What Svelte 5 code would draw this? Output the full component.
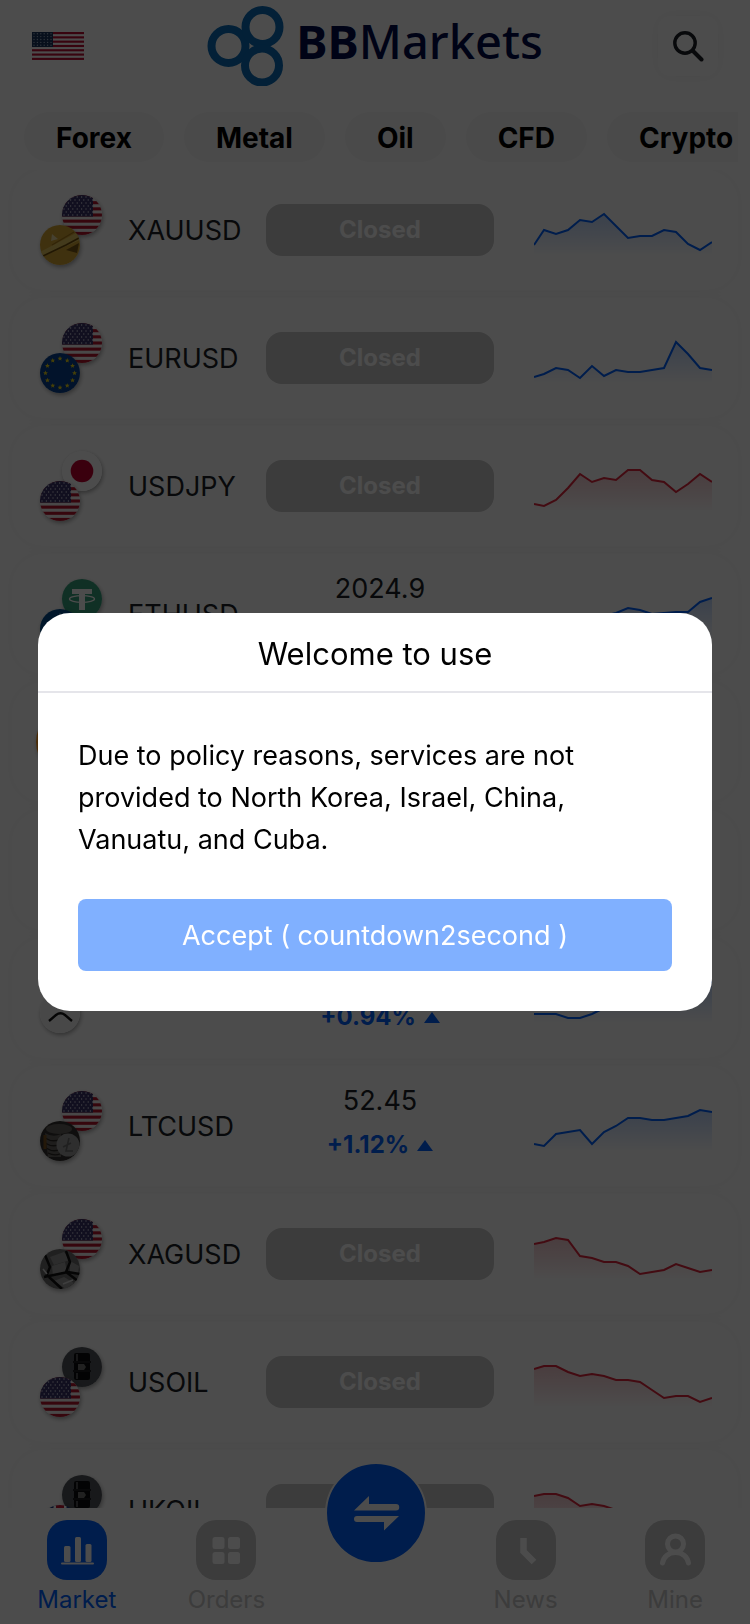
<script lang="ts">
  type Quote = {
    symbol: string
    icons: string[]
    price?: string
    change?: string
    up: boolean
    points: number[]
  }

  const tabs = ['Forex', 'Metal', 'Oil', 'CFD', 'Crypto']

  const quotes: Quote[] = [
    { symbol: 'XAUUSD', icons: ['us', 'gold'], up: true, points: [55, 40, 44, 40, 30, 32, 24, 36, 48, 46, 46, 40, 42, 54, 60, 52] },
    { symbol: 'EURUSD', icons: ['us', 'eu'], up: true, points: [59, 56, 50, 52, 60, 48, 58, 52, 54, 54, 52, 50, 24, 36, 50, 52] },
    { symbol: 'USDJPY', icons: ['jp', 'us'], up: false, points: [58, 60, 54, 42, 28, 36, 32, 34, 24, 24, 34, 36, 46, 38, 28, 36] },
    { symbol: 'ETHUSD', icons: ['usdt', 'eth'], price: '2024.9', change: '+1.05%', up: true, points: [58, 60, 54, 50, 48, 44, 42, 39, 34, 36, 40, 39, 38, 38, 28, 24] },
    { symbol: 'BTCUSD', icons: ['btc'], price: '60120', change: '+0.82%', up: true, points: [60, 58, 54, 50, 48, 46, 42, 40, 38, 36, 38, 36, 32, 30, 28, 24] },
    { symbol: 'BCHUSD', icons: ['us', 'btc'], price: '318.2', change: '+0.61%', up: true, points: [60, 56, 54, 50, 50, 46, 44, 40, 38, 36, 34, 36, 30, 30, 26, 24] },
    { symbol: 'XRPUSD', icons: ['us', 'xrp'], price: '0.5312', change: '+0.94%', up: true, points: [56, 56, 56, 60, 60, 56, 50, 46, 42, 40, 38, 36, 34, 30, 26, 24] },
    { symbol: 'LTCUSD', icons: ['us', 'ltc'], price: '52.45', change: '+1.12%', up: true, points: [58, 60, 48, 46, 44, 58, 46, 40, 32, 32, 34, 34, 32, 30, 24, 26] },
    { symbol: 'XAGUSD', icons: ['us', 'silver'], up: false, points: [30, 28, 24, 26, 42, 44, 48, 48, 52, 60, 58, 56, 50, 54, 58, 56] },
    { symbol: 'USOIL', icons: ['oil', 'us'], up: false, points: [27, 24, 24, 30, 34, 32, 34, 38, 38, 40, 48, 56, 54, 54, 60, 56] },
    { symbol: 'UKOIL', icons: ['oil', 'uk'], up: false, points: [26, 24, 24, 28, 36, 34, 36, 40, 40, 42, 48, 54, 54, 56, 60, 58] },
  ]

  let countdown = $state(2)

  function line(points: number[]) {
    return points.map((y, i) => `${i === 0 ? 0 : i * 12 - 2},${y}`).join(' ')
  }

  const stars = Array.from({ length: 12 }, (_, i) => {
    const a = (i * Math.PI) / 6
    return { x: 20 + 14.5 * Math.sin(a), y: 20 - 14.5 * Math.cos(a) }
  })
</script>

{#snippet coin(kind: string)}
  <svg viewBox="0 0 40 40" aria-hidden="true">
    {#if kind === 'us'}
      <rect width="40" height="40" fill="#f4f1f1" />
      {#each [0, 1, 2, 3, 4, 5, 6] as i}
        <rect y={i * 6.15} width="40" height="3.08" fill="#b5162d" />
      {/each}
      <rect width="31" height="21.6" fill="#3b3568" />
      {#each [0, 1, 2, 3, 4, 5, 6] as r}
        {#each [0, 1, 2, 3, 4, 5, 6] as c}
          <circle cx={2 + c * 4.4 + (r % 2) * 2.2} cy={2 + r * 3} r=".7" fill="#d5d3e2" />
        {/each}
      {/each}
    {:else if kind === 'eu'}
      <rect width="40" height="40" fill="#08428f" />
      {#each stars as s}
        <path d="M{s.x} {s.y - 2.4}l.7 1.6 1.7.1-1.3 1.1.4 1.7-1.5-.9-1.5.9.4-1.7-1.3-1.1 1.7-.1z" fill="#e8d21a" />
      {/each}
    {:else if kind === 'jp'}
      <rect width="40" height="40" fill="#fff" />
      <circle cx="20" cy="20" r="11.3" fill="#c4002f" />
    {:else if kind === 'gold'}
      <rect width="40" height="40" fill="#d3a433" />
      <path d="M0 27 36 8l4 4v3L4 31z" fill="#e0c25e" />
      <path d="M3 31 26 20l13-7" fill="none" stroke="#6f4d0c" stroke-width="1.6" />
      <path d="M12 20 34 7" stroke="#a77a1c" stroke-width="1.2" />
      <path d="m12 9 6 5-7 2z" fill="#ead9a4" />
      <path d="m26 25 13-7-2 10z" fill="#7a5714" />
    {:else if kind === 'usdt'}
      <rect width="40" height="40" fill="#36a07c" />
      <path d="M10 10h20v5h-7v16h-6V15h-7z" fill="#fff" />
      <ellipse cx="20" cy="20" rx="12.5" ry="3.3" fill="none" stroke="#fff" stroke-width="1.3" />
    {:else if kind === 'eth'}
      <rect width="40" height="40" fill="#004a8c" />
      <path d="m20 4 9 16-9 6-9-6z" fill="#c9d6e6" />
      <path d="m20 28 9-6-9 14-9-14z" fill="#9db3cc" />
    {:else if kind === 'btc'}
      <rect width="40" height="40" fill="#f7931a" />
      <path d="M15 11h7a4 4 0 0 1 0 9h-7zm0 9h8a4 4 0 0 1 0 9h-8zM17 8v3m4-3v3m-4 18v3m4-3v3" fill="none" stroke="#fff" stroke-width="3" />
    {:else if kind === 'xrp'}
      <rect width="40" height="40" fill="#f2f2f2" />
      <path d="m9 6 7 6q4.5 3.5 9 0l7-6M9 28l7-6q4.5-3.5 9 0l7 6" fill="none" stroke="#111" stroke-width="2.4" />
    {:else if kind === 'ltc'}
      <rect width="40" height="40" fill="#34312f" />
      <ellipse cx="19" cy="8" rx="13" ry="5" fill="#66625f" />
      <path d="M5 12q8 5 16 1v23H8z" fill="#66625f" />
      <path d="M5 17q8 5 16 1M5 22q8 5 16 1M6 27q8 5 14 1M8 32q6 3 12 1" fill="none" stroke="#2d2926" stroke-width="1.3" />
      <path d="M5 14v14" stroke="#7a5220" stroke-width="3" />
      <circle cx="28" cy="24" r="11.5" fill="#9b9b9b" />
      <path d="m29 17-3 13h7M23 26l8-4" fill="none" stroke="#6c6c6c" stroke-width="1.6" />
    {:else if kind === 'silver'}
      <rect width="40" height="40" fill="#6c6c6c" />
      <path d="M10 8 24 3l6 8-16 5z" fill="#959595" />
      <path d="m12 17 13-4 2 11-14 3z" fill="#9c9c9c" />
      <path d="m30 12 9 5-1 8-8-2zM14 32l10-4 10 6-8 6z" fill="#989898" />
      <path d="m5 6 5 12-4 10M26 2l4 11-4 10M4 28l24-5 12 2M9 28l13 12M26 23l12 9" fill="none" stroke="#111" stroke-width="2.5" />
      <path d="m23 35 10-4M3 20l4 5" stroke="#cfcfcf" stroke-width="1.6" />
    {:else if kind === 'oil'}
      <rect width="40" height="40" fill="#50545a" />
      <rect x="12" y="6" width="16" height="27" rx="2" fill="#0d0d0e" />
      <path d="M11 15h18M11 24h18" stroke="#1c1c1e" stroke-width="2" />
      <path d="M15 7v7M15 26v6" stroke="#5f6164" stroke-width="1.6" />
      <path d="M16 17h6l2 3-2 3h-6z" fill="#6f706e" />
    {:else}
      <rect width="40" height="40" fill="#1e3a80" />
      <path d="m0 0 40 40M40 0 0 40" stroke="#fff" stroke-width="8" />
      <path d="m0 0 40 40M40 0 0 40" stroke="#c4142f" stroke-width="3" />
      <path d="M20 0v40M0 20h40" stroke="#fff" stroke-width="13" />
      <path d="M20 0v40M0 20h40" stroke="#c4142f" stroke-width="8" />
    {/if}
  </svg>
{/snippet}

<div class="page">
  <header>
    <button class="lang" aria-label="Language">
      <svg viewBox="0 0 52 28">
        <rect width="52" height="28" fill="#fff" />
        {#each [0, 1, 2, 3, 4, 5, 6] as i}
          <rect y={i * 4.3} width="52" height="2.15" fill="#bd0f34" />
        {/each}
        <rect width="21" height="15" fill="#1b365f" />
        {#each [0, 1, 2, 3, 4] as r}
          {#each [0, 1, 2, 3, 4, 5] as c}
            <circle cx={2 + c * 3.4} cy={1.7 + r * 2.9} r=".7" fill="#9fb0c6" />
          {/each}
        {/each}
      </svg>
    </button>
    <div class="logo">
      <svg viewBox="0 0 77 80" aria-hidden="true">
        <g fill="none" stroke="#0a6cb8" stroke-width="8">
          <circle cx="21.5" cy="40" r="17" />
          <circle cx="55.5" cy="21" r="17" />
          <circle cx="55" cy="59.5" r="17" />
        </g>
      </svg>
      <span><b>BB</b>Markets</span>
    </div>
    <button class="search" aria-label="Search">
      <svg viewBox="0 0 32 32" fill="none" stroke="#1b1f26" stroke-linecap="round">
        <circle cx="13" cy="13" r="10.2" stroke-width="3.4" />
        <path d="m21 21 8.5 8.5" stroke-width="4" />
      </svg>
    </button>
  </header>

  <nav class="tabs">
    {#each tabs as tab}
      <button>{tab}</button>
    {/each}
  </nav>

  <main>
    {#each quotes as q}
      <article>
        <div class="pair">
          {#if q.icons.length === 1}
            <span class="coin single">{@render coin(q.icons[0])}</span>
          {:else}
            <span class="coin back">{@render coin(q.icons[0])}</span>
            <span class="coin front">{@render coin(q.icons[1])}</span>
          {/if}
        </div>
        <span class="symbol">{q.symbol}</span>
        {#if q.price}
          <div class="quote">
            <span class="price">{q.price}</span>
            <span class="change">{q.change}<i></i></span>
          </div>
        {:else}
          <span class="closed">Closed</span>
        {/if}
        <svg class="chart" class:down={!q.up} viewBox="0 0 178 80" aria-hidden="true">
          <defs>
            <linearGradient id="fill-{q.symbol}" gradientUnits="userSpaceOnUse" x1="0" y1="22" x2="0" y2="66">
              <stop offset="0" stop-color="currentColor" stop-opacity=".25" />
              <stop offset="1" stop-color="currentColor" stop-opacity="0" />
            </linearGradient>
          </defs>
          <polygon points="0,66 {line(q.points)} 178,66" fill="url(#fill-{q.symbol})" />
          <polyline points={line(q.points)} fill="none" stroke="currentColor" stroke-width="2" />
        </svg>
      </article>
    {/each}
  </main>

  <nav class="bottom">
    <a href="#market" class="active">
      <span class="tile">
        <svg viewBox="0 0 60 60" fill="#fff">
          <rect x="17" y="26" width="6.5" height="16" rx="1.5" />
          <rect x="28" y="17" width="6" height="25" rx="1.5" />
          <rect x="38.5" y="24" width="6" height="18" rx="1.5" />
          <rect x="14" y="42.5" width="33" height="2" rx="1" />
        </svg>
      </span>
      Market
    </a>
    <a href="#orders">
      <span class="tile">
        <svg viewBox="0 0 60 60" fill="#fff">
          <rect x="16.5" y="17" width="12" height="12" rx="2.5" />
          <rect x="32" y="17" width="12" height="12" rx="2.5" />
          <rect x="16.5" y="32" width="12" height="12" rx="2.5" />
          <rect x="32" y="32" width="12" height="12" rx="2.5" />
        </svg>
      </span>
      Orders
    </a>
    <div class="middle">
      <button class="trade" aria-label="Trade">
        <svg viewBox="0 0 98 98" fill="#fff">
          <path d="M27 46.5 42 32v8h27a3 3 0 0 1 0 6.5z" />
          <path d="M72 52 57 66.5V58H30a3 3 0 0 1 0-6z" />
        </svg>
      </button>
    </div>
    <a href="#news">
      <span class="tile">
        <svg viewBox="0 0 60 60" fill="none" stroke="#fff" stroke-width="6.5">
          <path d="M27.5 18v13.5L38 42" />
        </svg>
      </span>
      News
    </a>
    <a href="#mine">
      <span class="tile">
        <svg viewBox="0 0 60 60" fill="none" stroke="#fff" stroke-width="5" stroke-linecap="round">
          <circle cx="30.5" cy="24" r="8" />
          <path d="M17.5 43c1-6 6-10.5 13-10.5S42.500 37 43.5 43" />
        </svg>
      </span>
      Mine
    </a>
  </nav>
</div>

<div class="mask">
  <div class="dialog" role="dialog" aria-modal="true" aria-labelledby="dialog-title">
    <h2 id="dialog-title">Welcome to use</h2>
    <div class="body">
      <p>Due to policy reasons, services are not provided to North Korea, Israel, China, Vanuatu, and Cuba.</p>
      <button disabled={countdown > 0}>Accept ( countdown{countdown}second )</button>
    </div>
  </div>
</div>

<style>
  :global(body) { margin: 0; background: #fff; }
  :global(#app) { font-family: Inter, 'Liberation Sans', sans-serif; }
  button { font: inherit; border: 0; padding: 0; background: none; }
  svg { display: block; }

  .page {
    --primary: #0061ff;
    display: flex; flex-direction: column;
    height: 100vh; overflow: hidden;
    background: #fff; color: #1b1f26;
  }

  header {
    display: grid; grid-template-columns: 1fr auto 1fr; align-items: center;
    flex-shrink: 0; padding: 6px 32px;
  }
  .lang { width: 52px; }
  .logo {
    display: flex; align-items: center; gap: 12px;
    font: 500 47px/60px 'Noto Sans', 'Open Sans', sans-serif; color: #030a4a;
  }
  .logo svg { width: 77px; height: 80px; }
  .logo span { padding-bottom: 10px; }
  .search {
    display: grid; place-items: center; justify-self: end;
    width: 60px; height: 60px; border-radius: 12px;
    background: #fff; box-shadow: 0 0 16px rgba(0, 0, 0, .05);
  }
  .search svg { width: 32px; height: 32px; }

  .tabs {
    display: flex; gap: 20px; flex-shrink: 0; overflow: hidden;
    margin: 20px 12px 8px; padding-left: 12px;
  }
  .tabs button {
    flex-shrink: 0; height: 50px; padding: 2px 32px 0; border-radius: 25px;
    background: #f7f7f7; color: #000; font-size: 28px; font-weight: 700;
  }

  main {
    display: flex; flex-direction: column; gap: 8px;
    flex: 1; min-height: 0; overflow: hidden; padding: 0 12px;
  }
  article {
    display: grid; grid-template-columns: 62px minmax(0, 1fr) 228px 218px; align-items: center;
    flex-shrink: 0; height: 120px; padding: 0 26px 0 28px; border-radius: 32px;
    background: #fff; box-shadow: 0 0 16px rgba(0, 0, 0, .04);
  }
  .pair { position: relative; height: 70px; }
  .coin {
    position: absolute; width: 40px; height: 40px; border-radius: 50%;
    overflow: hidden; box-shadow: 1px 2px 4px rgba(0, 0, 0, .35);
  }
  .back { top: 0; right: 0; }
  .front { bottom: 0; left: 0; }
  .single { top: 0; left: -4px; width: 70px; height: 70px; }
  .symbol { padding-left: 26px; font-size: 27px; }
  .closed {
    height: 52px; border-radius: 16px; background: #c8c8c8; color: #fff;
    font-size: 24px; line-height: 52px; font-weight: 700; text-align: center;
  }
  .quote { display: flex; flex-direction: column; align-items: center; gap: 10px; padding-bottom: 6px; }
  .price { font-size: 27px; line-height: 34px; }
  .change {
    display: flex; align-items: center; gap: 8px;
    color: var(--primary); font-size: 24px; line-height: 34px; font-weight: 700;
  }
  .change i {
    border: 8px solid transparent; border-top: 0;
    border-bottom: 11px solid var(--primary);
  }
  .chart { width: 178px; height: 80px; justify-self: end; color: var(--primary); }
  .chart.down { color: #e0263c; }

  .bottom {
    display: flex; position: relative; flex-shrink: 0;
    height: 116px; padding-left: 2px; background: #fff;
  }
  .bottom a, .middle {
    display: flex; flex: 1; flex-direction: column; align-items: center;
  }
  .bottom a {
    gap: 4px; padding-top: 12px; color: #c8c8c8;
    font-size: 24px; line-height: 32px; text-decoration: none;
  }
  .bottom a.active { color: var(--primary); }
  .tile { width: 60px; height: 60px; border-radius: 20px; background: #c8c8c8; }
  .active .tile { background: var(--primary); }
  .trade {
    width: 102px; height: 102px; margin-top: -46px;
    border: 2px solid #fff; border-radius: 50%; background: var(--primary);
  }

  .mask {
    position: fixed; inset: 0; display: grid; align-items: center;
    padding: 0 38px; background: rgba(0, 0, 0, .7);
  }
  .dialog { border-radius: 32px; overflow: hidden; background: #fff; color: #000; }
  h2 {
    margin: 0; padding: 20px 0 16px; border-bottom: 2px solid #e5e5ea;
    font-size: 31px; line-height: 42px; font-weight: 400; text-align: center;
  }
  .body { padding: 42px 40px 40px; }
  p { margin: 0 0 38px; font-size: 27px; line-height: 42px; }
  .body button {
    width: 100%; height: 72px; border-radius: 8px;
    background: #80b0ff; color: #fff; font-size: 27px;
  }
</style>
